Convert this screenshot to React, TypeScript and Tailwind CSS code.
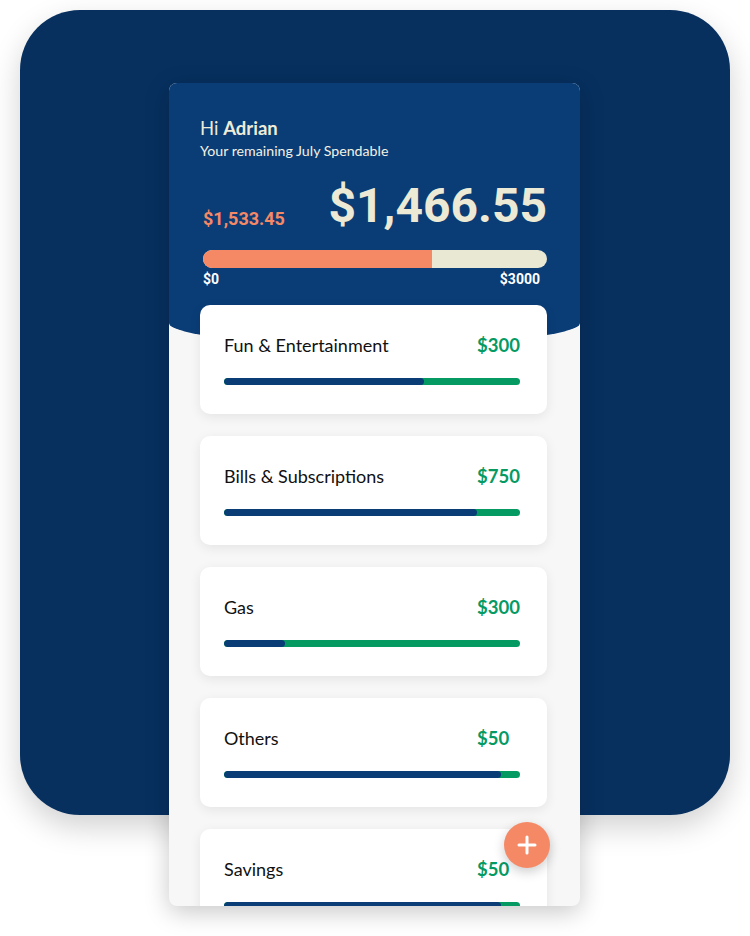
import React from "react";

const cats = [
  { name: "Fun & Entertainment", amount: "$300", pct: 67.6 },
  { name: "Bills & Subscriptions", amount: "$750", pct: 85.5 },
  { name: "Gas", amount: "$300", pct: 20.6 },
  { name: "Others", amount: "$50", pct: 93.6 },
  { name: "Savings", amount: "$50", pct: 93.6 },
];

export default function App() {
  return (
    <div className="w-[750px] h-[936px] bg-white overflow-hidden pt-[10px] px-[20px]" style={{ fontFamily: "Lato, 'Open Sans', sans-serif" }}>
      <div className="h-[805px] rounded-[60px] bg-[#07305f] shadow-[0_12px_30px_rgba(0,0,0,0.18)] flex justify-start pl-[149px] pt-[73px]">
        <div className="w-[411px] h-[823px] shrink-0 rounded-[8px] bg-[#f7f7f7] overflow-hidden flex flex-col shadow-[0_6px_24px_rgba(0,0,0,0.22)] relative">
          <div className="h-[262px] shrink-0 bg-[#0a3c76] rounded-bl-[50%_22px] rounded-br-[50%_22px] pl-[31px] pr-[33px] pt-[34px] text-[#eeecd8]">
            <div className="text-[18.5px] leading-[22px]">
              Hi <span className="font-bold">Adrian</span>
            </div>
            <div className="text-[14.2px] leading-[18px] mt-[3px] text-[#f3f1e4]">Your remaining July Spendable</div>
            <div className="flex items-end justify-between mt-[18px]" style={{ fontFamily: "Roboto, sans-serif" }}>
              <div className="text-[#f58966] font-bold text-[18px] leading-[20px] mb-[5px] pl-[3px]">$1,533.45</div>
              <div className="text-[#ecead4] font-bold text-[48px] leading-[56px]">$1,466.55</div>
            </div>
            <div className="ml-[3px] mt-[16px] h-[18px] rounded-full bg-[#e9e8d2] overflow-hidden flex">
              <div className="h-full bg-[#f58966]" style={{ width: "66.6%" }} />
            </div>
            <div className="ml-[3px] mt-[3px] flex justify-between text-white font-bold text-[14px] leading-[16px] pr-[7px]" style={{ fontFamily: "Roboto, sans-serif" }}>
              <span>$0</span>
              <span>$3000</span>
            </div>
          </div>
          <div className="-mt-[40px] pl-[31px] pr-[33px] flex flex-col gap-[22px] relative">
            {cats.map((c) => (
              <div key={c.name} className="h-[109px] shrink-0 rounded-[10px] bg-white shadow-[0_3px_12px_rgba(0,0,0,0.08)] pl-[24px] pr-[27px] pt-[29px]">
                <div className="flex items-center justify-between">
                  <span className="text-[18px] leading-[22px] text-[#111111]">{c.name}</span>
                  <span className="w-[43px] text-[18.5px] leading-[22px] font-bold text-[#069a63]">{c.amount}</span>
                </div>
                <div className="mt-[22px] h-[7px] rounded-full bg-[#069a63] overflow-hidden flex">
                  <div className="h-full bg-[#0a3c76] rounded-full" style={{ width: `${c.pct}%` }} />
                </div>
              </div>
            ))}
          </div>
          <div className="absolute left-[335px] top-[739px] w-[46px] h-[46px] rounded-full bg-[#f58966] shadow-[0_4px_12px_rgba(0,0,0,0.2)] flex items-center justify-center">
            <svg width="20" height="20" viewBox="0 0 20 20">
              <path d="M10 2v16M2 10h16" stroke="white" strokeWidth="3" strokeLinecap="round" />
            </svg>
          </div>
        </div>
      </div>
    </div>
  );
}
